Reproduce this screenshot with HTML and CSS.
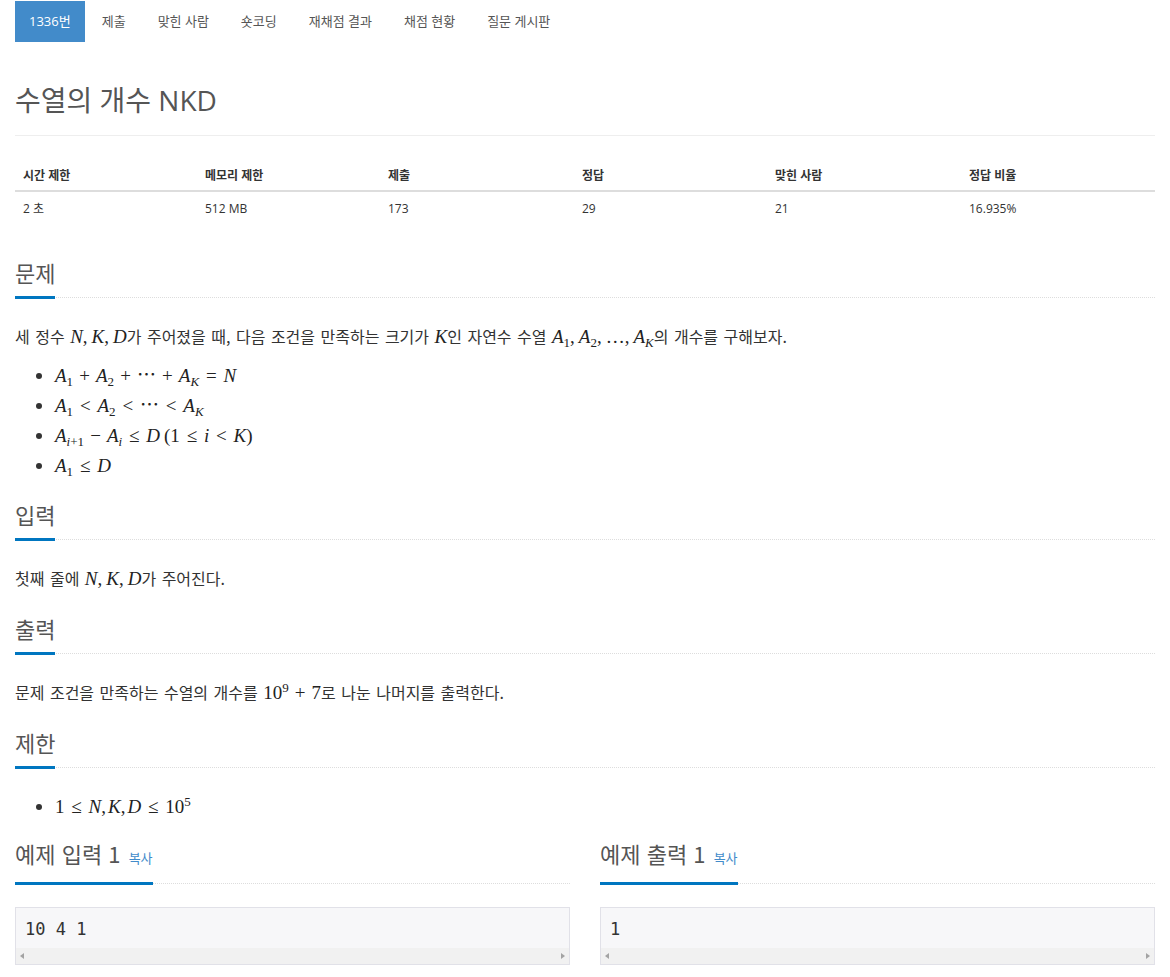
FILE: index.html
```html
<!DOCTYPE html>
<html lang="ko">
<head>
<meta charset="utf-8">
<title>수열의 개수 NKD</title>
<link rel="stylesheet" href="styles.css">
</head>
<body>
<div class="container">
  <ul class="nav">
    <li class="active"><a>1336번</a></li>
    <li><a>제출</a></li>
    <li><a>맞힌 사람</a></li>
    <li><a>숏코딩</a></li>
    <li><a>재채점 결과</a></li>
    <li><a>채점 현황</a></li>
    <li><a>질문 게시판</a></li>
  </ul>

  <div class="page-header">
    <h1>수열의 개수 NKD</h1>
  </div>

  <table class="info">
    <thead>
      <tr>
        <th class="c1">시간 제한</th>
        <th class="c2">메모리 제한</th>
        <th class="c3">제출</th>
        <th class="c4">정답</th>
        <th class="c5">맞힌 사람</th>
        <th>정답 비율</th>
      </tr>
    </thead>
    <tbody>
      <tr>
        <td>2 초</td>
        <td>512 MB</td>
        <td>173</td>
        <td>29</td>
        <td>21</td>
        <td>16.935%</td>
      </tr>
    </tbody>
  </table>

  <section class="sec">
    <div class="headline"><h2>문제</h2></div>
    <div class="text">
      <p>세 정수 <span class="math"><i>N</i>,<span class="th"></span><i>K</i>,<span class="th"></span><i>D</i></span>가 주어졌을 때, 다음 조건을 만족하는 크기가 <span class="math"><i>K</i></span>인 자연수 수열 <span class="math"><i>A</i><sub>1</sub>,<span class="th"></span><i>A</i><sub>2</sub>,<span class="th"></span>…,<span class="th"></span><i>A</i><sub><i>K</i></sub></span>의 개수를 구해보자.</p>
      <ul class="list">
        <li><span class="math"><i>A</i><sub>1</sub><span class="op">+</span><i>A</i><sub>2</sub><span class="op">+</span>⋯<span class="op">+</span><i>A</i><sub><i>K</i></sub><span class="rel">=</span><i>N</i></span></li>
        <li><span class="math"><i>A</i><sub>1</sub><span class="rel">&lt;</span><i>A</i><sub>2</sub><span class="rel">&lt;</span>⋯<span class="rel">&lt;</span><i>A</i><sub><i>K</i></sub></span></li>
        <li><span class="math"><i>A</i><sub><i>i</i>+1</sub><span class="op">−</span><i>A</i><sub><i>i</i></sub><span class="rel">≤</span><i>D</i><span class="th"></span>(1<span class="rel">≤</span><i>i</i><span class="rel">&lt;</span><i>K</i>)</span></li>
        <li><span class="math"><i>A</i><sub>1</sub><span class="rel">≤</span><i>D</i></span></li>
      </ul>
    </div>
  </section>

  <section class="sec">
    <div class="headline"><h2>입력</h2></div>
    <div class="text">
      <p>첫째 줄에 <span class="math"><i>N</i>,<span class="th"></span><i>K</i>,<span class="th"></span><i>D</i></span>가 주어진다.</p>
    </div>
  </section>

  <section class="sec">
    <div class="headline"><h2>출력</h2></div>
    <div class="text">
      <p>문제 조건을 만족하는 수열의 개수를 <span class="math">10<sup>9</sup><span class="op">+</span>7</span>로 나눈 나머지를 출력한다.</p>
    </div>
  </section>

  <section class="sec">
    <div class="headline"><h2>제한</h2></div>
    <div class="text">
      <ul class="list">
        <li><span class="math">1<span class="rel">≤</span><i>N</i>,<span class="th2"></span><i>K</i>,<span class="th2"></span><i>D</i><span class="rel">≤</span>10<sup>5</sup></span></li>
      </ul>
    </div>
  </section>

  <div class="samples">
    <section class="sec sample">
      <div class="headline"><h2>예제 입력 1 <a class="copy">복사</a></h2></div>
      <div class="pre-box">
        <pre>10 4 1</pre>
        <div class="hscroll"><span class="arr left"></span><span class="arr right"></span></div>
      </div>
    </section>
    <section class="sec sample">
      <div class="headline"><h2>예제 출력 1 <a class="copy">복사</a></h2></div>
      <div class="pre-box">
        <pre>1</pre>
        <div class="hscroll"><span class="arr left"></span><span class="arr right"></span></div>
      </div>
    </section>
  </div>
</div>
</body>
</html>
```

FILE: styles.css
```css
* { box-sizing: border-box; }

html, body {
  margin: 0;
  padding: 0;
  background: #fff;
}

body {
  font-family: "Open Sans", "Noto Sans CJK KR", sans-serif;
  color: #333;
  font-size: 13px;
  overflow: hidden;
}

.container {
  padding: 1px 15px 0 15px;
  width: 1170px;
}

/* nav */
.nav {
  list-style: none;
  margin: 0;
  padding: 0;
  display: flex;
}
.nav li {
  margin-right: 2px;
}
.nav li a {
  display: block;
  height: 41px;
  line-height: 41px;
  padding: 0 15px;
  color: #555;
  font-size: 13px;
  font-family: "Open Sans", "Noto Sans CJK KR", sans-serif;
}
.nav li.active a {
  background: #428bca;
  color: #fff;
  padding: 0 14px;
}

/* title */
.page-header {
  margin-top: 42px;
  padding-bottom: 19px;
  border-bottom: 1px solid #eee;
}
.page-header h1 {
  margin: 0;
  font-size: 28px;
  line-height: 32px;
  font-weight: 400;
  color: #555;
  font-family: "Open Sans", "Noto Sans CJK KR", sans-serif;
}

/* info table */
.info {
  width: 100%;
  margin-top: 21px;
  border-collapse: collapse;
  table-layout: fixed;
  font-size: 12px;
}
.info th, .info td {
  text-align: left;
  padding: 7px 8px;
  line-height: 20px;
}
.info th {
  font-weight: 700;
  color: #333;
  padding-top: 9px;
  padding-bottom: 4px;
  border-bottom: 2px solid #ddd;
}
.info td {
  color: #333;
}
.info .c1 { width: 182px; }
.info .c2 { width: 183px; }
.info .c3 { width: 194px; }
.info .c4 { width: 193px; }
.info .c5 { width: 194px; }

/* sections */
.sec {
  margin-top: 31px;
}
.sec + .sec { margin-top: 22px; }

.headline {
  border-bottom: 1px dotted #ddd;
  display: flex;
}
.headline h2 {
  margin: 0 0 -2px 0;
  font-size: 22px;
  line-height: 30px;
  padding-bottom: 9px;
  font-weight: 400;
  color: #555;
  border-bottom: 3px solid #0076c0;
  font-family: "Noto Sans CJK KR", "Open Sans", sans-serif;
}

.text {
  display: flow-root;
  margin-top: 26px;
  font-family: "Noto Sans CJK KR", sans-serif;
  font-size: 16px;
  word-spacing: 1px;
  color: #333;
}
.text p {
  margin: 0 0 1px 0;
  line-height: 24px;
}
.text p + .list { margin-top: 15px; }
.list {
  margin: 0;
  padding-left: 40px;
}
.list li {
  line-height: 24px;
  margin-bottom: 6px;
}
.list li:last-child { margin-bottom: 0; }
.sec .text .list:first-child { margin-top: 0; }

/* math */
.math {
  font-family: "Liberation Serif", "DejaVu Serif", serif;
  font-size: 19px;
  line-height: 20px;
  color: #222;
  white-space: nowrap;
  word-spacing: 0;
}
.math i {
  font-style: italic;
}
.math sub {
  font-size: 13px;
  vertical-align: -4px;
  line-height: 0;
}
.math sup {
  font-size: 13px;
  vertical-align: 7px;
  line-height: 0;
}
.math .op { margin: 0 0.32em; }
.math .rel { margin: 0 0.36em; }
.math .th { display: inline-block; width: 4px; }
.math .th2 { display: inline-block; width: 2px; }

/* samples */
.samples {
  display: grid;
  grid-template-columns: 1fr 1fr;
  column-gap: 30px;
  margin-top: 20px;
}
.samples .sec { margin-top: 0; }
.copy {
  font-size: 13px;
  color: #428bca;
  margin-left: 2px;
}
.pre-box {
  margin-top: 23px;
  border: 1px solid #e1e1e8;
  background: #f7f7f9;
}
.pre-box pre {
  margin: 0;
  padding: 10px 9px 7px 9px;
  font-family: "DejaVu Sans Mono", monospace;
  font-size: 17px;
  line-height: 23px;
  color: #333;
}
.hscroll {
  height: 16px;
  background: #f1f1f1;
  position: relative;
}
.arr {
  position: absolute;
  top: 5px;
  width: 0;
  height: 0;
  border-top: 3.5px solid transparent;
  border-bottom: 3.5px solid transparent;
}
.arr.left {
  left: 4px;
  border-right: 4px solid #a3a3a3;
}
.arr.right {
  right: 4px;
  border-left: 4px solid #a3a3a3;
}
```
